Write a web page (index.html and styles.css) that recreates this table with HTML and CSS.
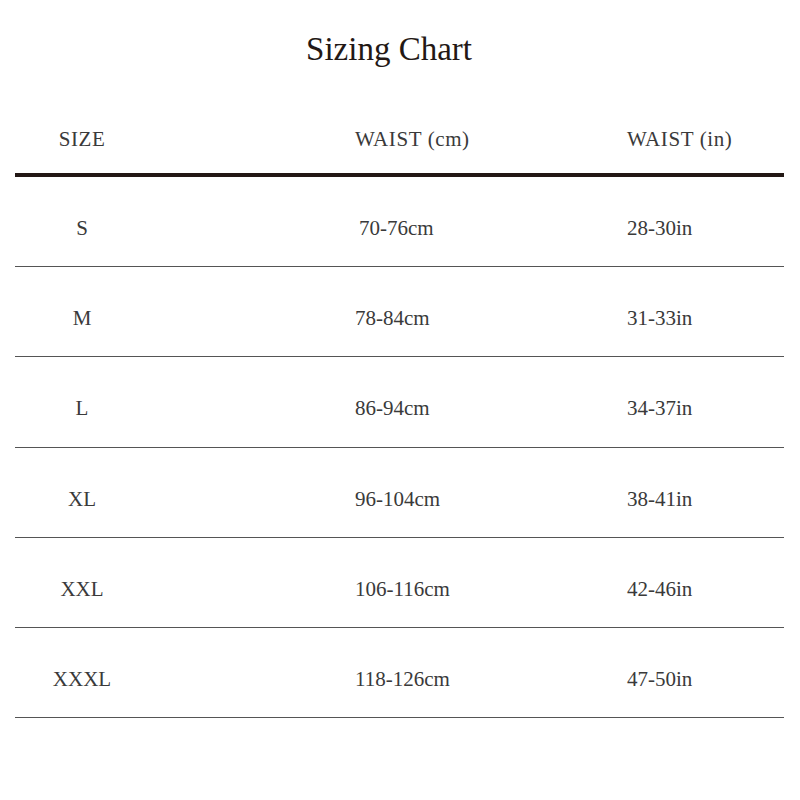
FILE: index.html
```html
<!DOCTYPE html>
<html>
<head>
<meta charset="utf-8">
<link rel="stylesheet" href="styles.css">
</head>
<body>
<h1 class="title">Sizing Chart</h1>
<div class="chart">
  <div class="row head">
    <span class="c1">SIZE</span>
    <span class="c2">WAIST (cm)</span>
    <span class="c3">WAIST (in)</span>
  </div>
  <div class="row">
    <span class="c1">S</span>
    <span class="c2 nudge">70-76cm</span>
    <span class="c3">28-30in</span>
  </div>
  <div class="row">
    <span class="c1">M</span>
    <span class="c2">78-84cm</span>
    <span class="c3">31-33in</span>
  </div>
  <div class="row">
    <span class="c1">L</span>
    <span class="c2">86-94cm</span>
    <span class="c3">34-37in</span>
  </div>
  <div class="row">
    <span class="c1">XL</span>
    <span class="c2">96-104cm</span>
    <span class="c3">38-41in</span>
  </div>
  <div class="row">
    <span class="c1">XXL</span>
    <span class="c2">106-116cm</span>
    <span class="c3">42-46in</span>
  </div>
  <div class="row">
    <span class="c1">XXXL</span>
    <span class="c2">118-126cm</span>
    <span class="c3">47-50in</span>
  </div>
</div>
</body>
</html>
```
FILE: styles.css
```css
html, body {
  margin: 0;
  padding: 0;
  background: #ffffff;
}

body {
  font-family: "Liberation Serif", "Times New Roman", serif;
  color: #3a3a3a;
}

.title {
  margin: 0;
  padding: 30px 22px 0 0;
  font-size: 33px;
  line-height: 38px;
  font-weight: normal;
  text-align: center;
  color: #231815;
}

.chart {
  margin: 0 16px 0 15px;
}

.row {
  display: grid;
  grid-template-columns: 340px 272px 1fr;
  align-items: center;
  box-sizing: border-box;
  height: 90.2px;
  padding-top: 14px;
  border-bottom: 1px solid #555555;
  font-size: 21px;
  line-height: normal;
}

.row.head {
  height: 109px;
  align-items: end;
  padding-top: 0;
  padding-bottom: 21px;
  border-bottom: 4px solid #231815;
  letter-spacing: 0.6px;
}

.c1 {
  width: 134px;
  text-align: center;
}

.c2, .c3 {
  text-align: left;
}

.nudge {
  padding-left: 4px;
}
```
